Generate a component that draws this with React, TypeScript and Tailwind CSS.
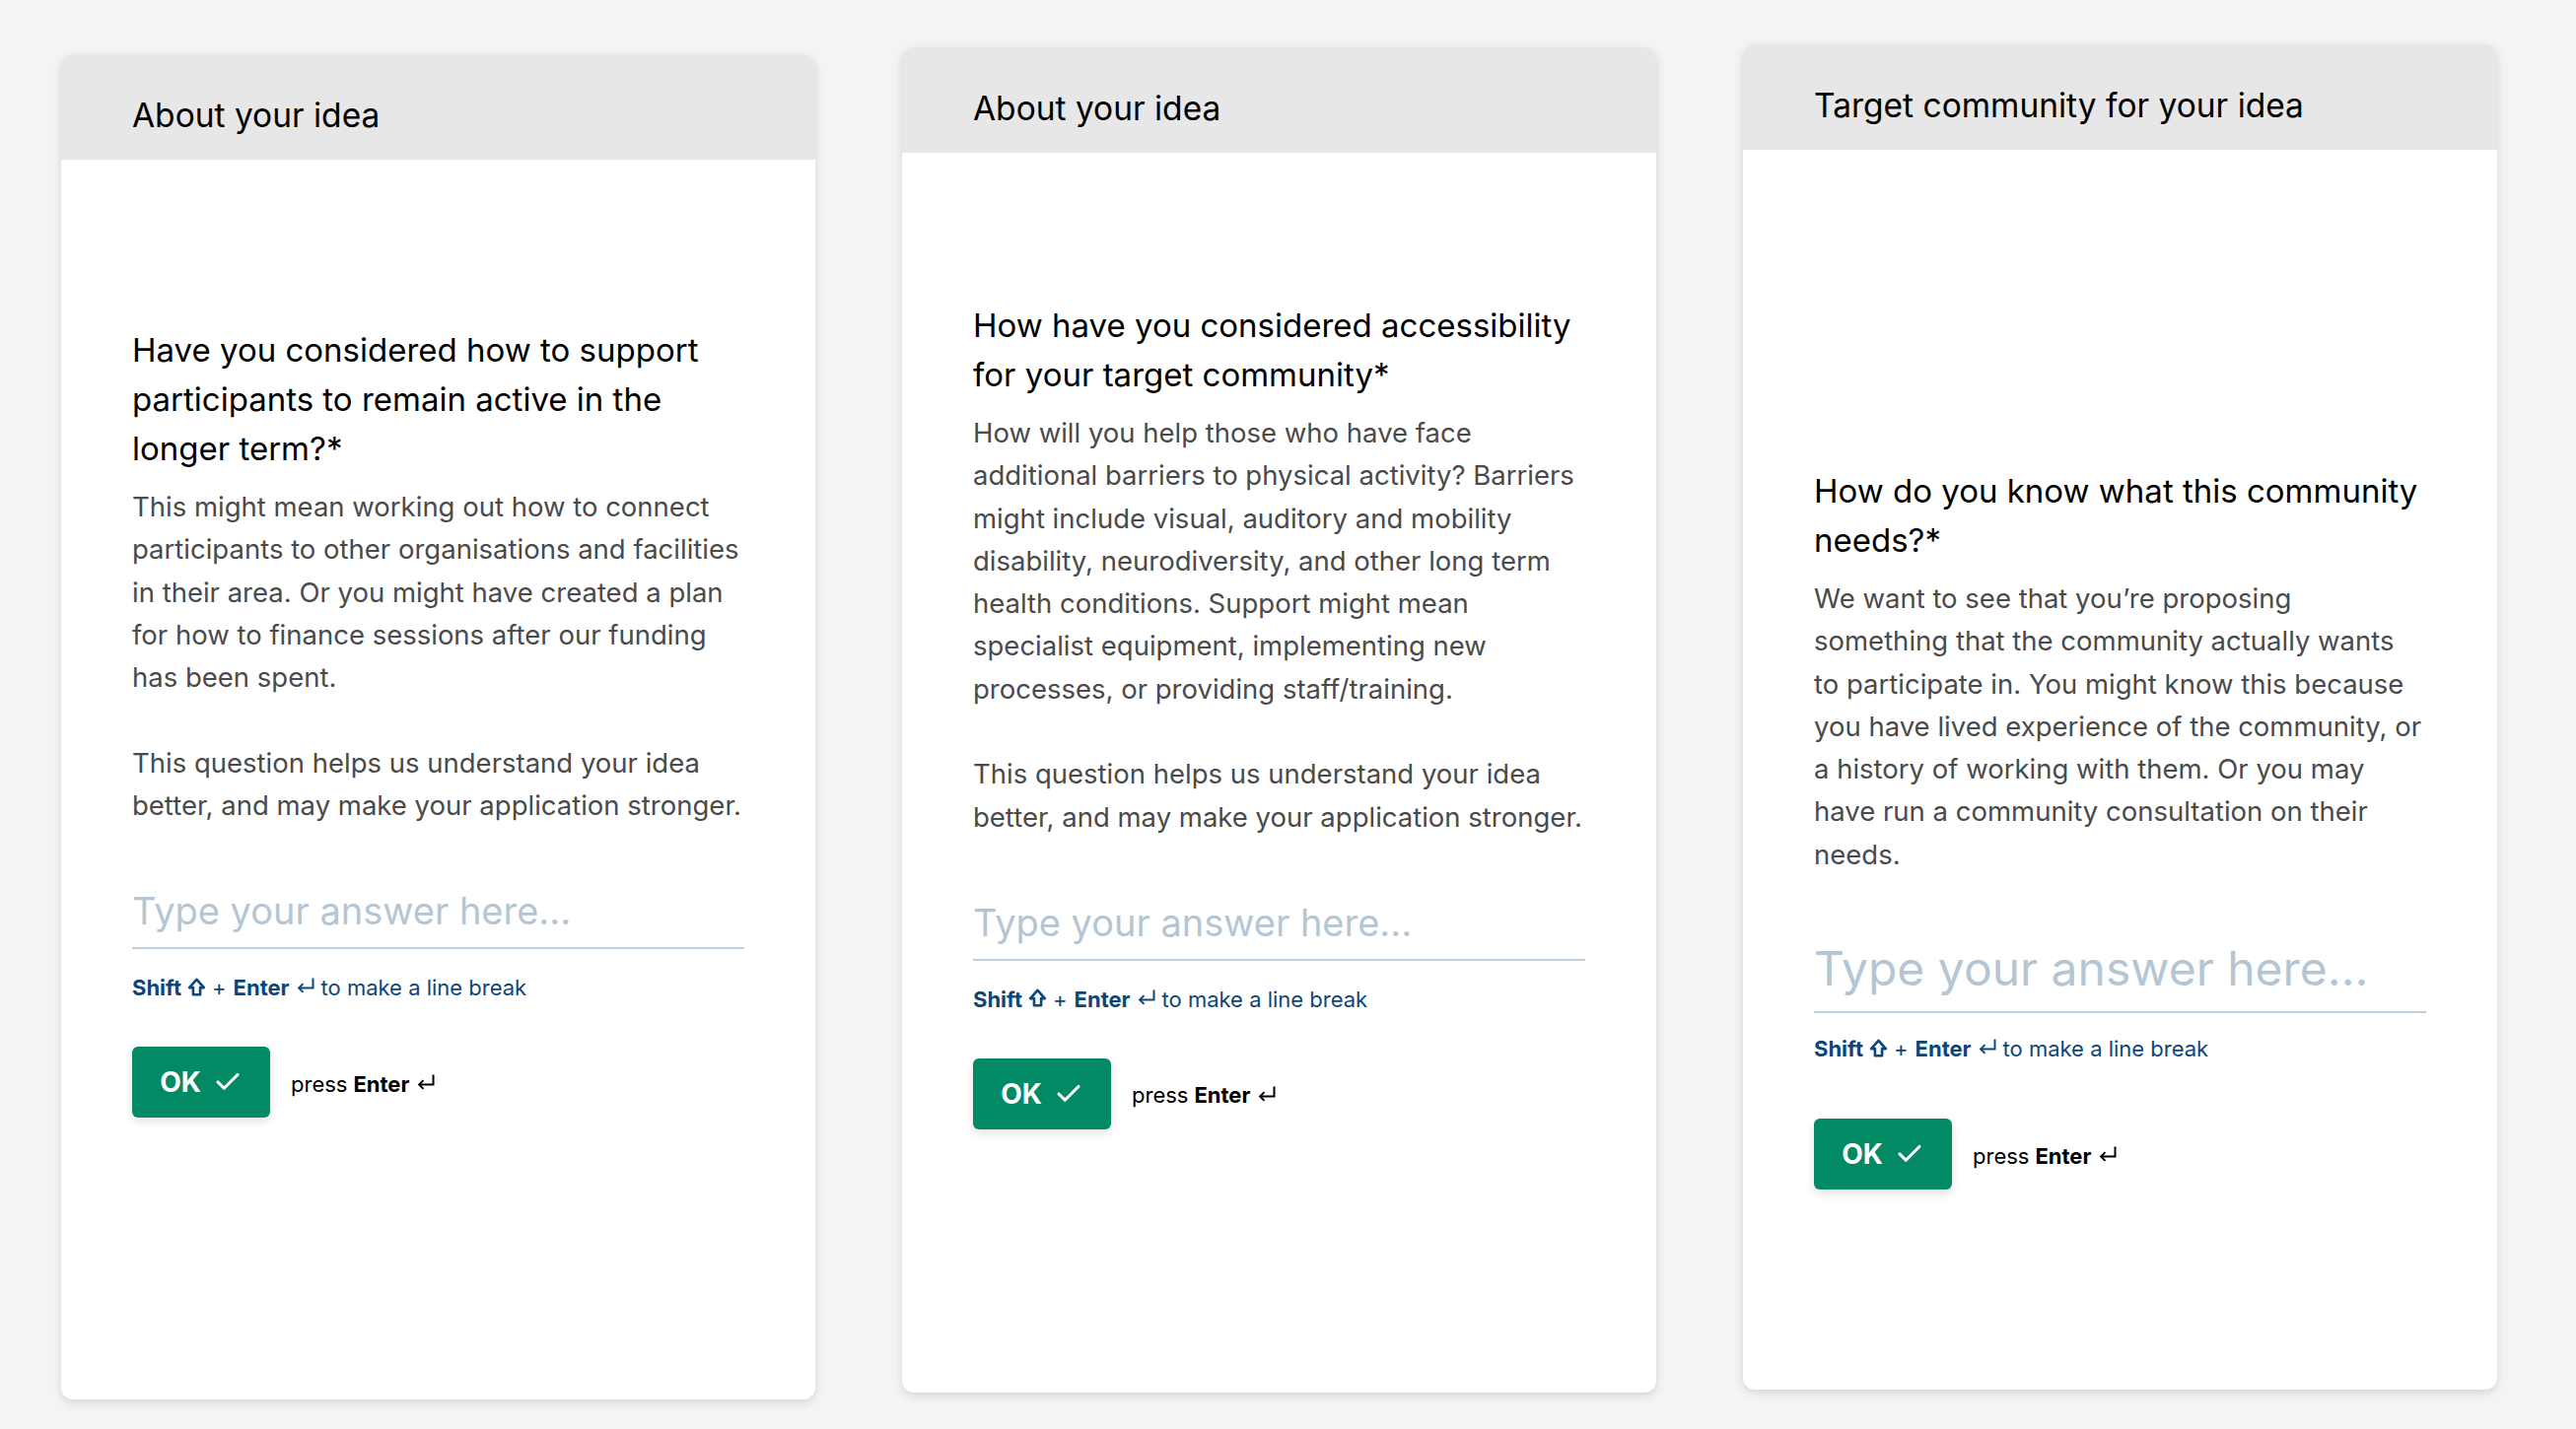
import { Check } from 'lucide-react';

type Question = {
  section: string;
  title: string[];
  paragraphs: string[][];
  cardClass: string;
  bodyClass: string;
  inputClass: string;
  helperClass: string;
  buttonRowClass: string;
};

const questions: Question[] = [
  {
    section: 'About your idea',
    title: ['Have you considered how to support', 'participants to remain active in the', 'longer term?*'],
    paragraphs: [
      [
        'This might mean working out how to connect',
        'participants to other organisations and facilities',
        'in their area. Or you might have created a plan',
        'for how to finance sessions after our funding',
        'has been spent.',
      ],
      ['This question helps us understand your idea', 'better, and may make your application stronger.'],
    ],
    cardClass: 'mt-[55px]',
    bodyClass: 'pt-[168px]',
    inputClass: 'mt-[55px] text-[38px] leading-[60px] pb-[7px]',
    helperClass: 'mt-[24px]',
    buttonRowClass: 'mt-[45px]',
  },
  {
    section: 'About your idea',
    title: ['How have you considered accessibility', 'for your target community*'],
    paragraphs: [
      [
        'How will you help those who have face',
        'additional barriers to physical activity? Barriers',
        'might include visual, auditory and mobility',
        'disability, neurodiversity, and other long term',
        'health conditions. Support might mean',
        'specialist equipment, implementing new',
        'processes, or providing staff/training.',
      ],
      ['This question helps us understand your idea', 'better, and may make your application stronger.'],
    ],
    cardClass: 'mt-[48px]',
    bodyClass: 'pt-[150px]',
    inputClass: 'mt-[55px] text-[38px] leading-[60px] pb-[7px]',
    helperClass: 'mt-[24px]',
    buttonRowClass: 'mt-[45px]',
  },
  {
    section: 'Target community for your idea',
    title: ['How do you know what this community', 'needs?*'],
    paragraphs: [
      [
        'We want to see that you\u2019re proposing',
        'something that the community actually wants',
        'to participate in. You might know this because',
        'you have lived experience of the community, or',
        'a history of working with them. Or you may',
        'have run a community consultation on their',
        'needs.',
      ],
    ],
    cardClass: 'mt-[45px]',
    bodyClass: 'pt-[321px]',
    inputClass: 'mt-[56px] text-[48px] leading-[75px] pb-[6px]',
    helperClass: 'mt-[21px]',
    buttonRowClass: 'mt-[56px]',
  },
];

function ShiftIcon() {
  return (
    <svg viewBox="0 0 16 16" className="inline-block w-[19px] h-[19px] mx-[6px] -mt-[2px]" fill="none" stroke="currentColor" strokeWidth="2.2" strokeLinejoin="round">
      <path d="M8 1.5 L1.8 8.5 H5 V14.5 H11 V8.5 H14.2 Z" />
    </svg>
  );
}

function EnterIcon({ className }: { className: string }) {
  return (
    <svg viewBox="0 0 16 16" className={className} fill="none" stroke="currentColor" strokeWidth="1.6">
      <path d="M14 2 V10 H2.5" />
      <path d="M6 6.5 L2.5 10 L6 13.5" />
    </svg>
  );
}

function QuestionCard({ q }: { q: Question }) {
  return (
    <div className={`w-[765px] h-[1365px] shrink-0 bg-white rounded-[12px] shadow-[0_3px_10px_rgba(0,0,0,0.13)] overflow-hidden flex flex-col ${q.cardClass}`}>
      {/* Section header */}
      <div className="h-[107px] shrink-0 bg-[#e7e7e7] px-[72px] pt-[42px]">
        <h2 className="text-[33.5px] leading-[40px] text-black">{q.section}</h2>
      </div>

      <div className={`px-[72px] ${q.bodyClass}`}>
        <h1 className="text-[33px] leading-[50px] text-black">
          {q.title.map((line, i) => (
            <span key={i} className="block whitespace-nowrap">
              {line}
            </span>
          ))}
        </h1>
        <div className="mt-[13px] text-[27.5px] leading-[43.3px] text-[#4a4a4a]">
          {q.paragraphs.map((p, i) => (
            <p key={i} className={i > 0 ? 'mt-[43.3px]' : ''}>
              {p.map((line, j) => (
                <span key={j} className="block whitespace-nowrap">
                  {line}
                </span>
              ))}
            </p>
          ))}
        </div>

        {/* Answer field */}
        <div className={`border-b-2 border-[#bfcfdb] text-[#b4c6d4] ${q.inputClass}`}>
          Type your answer here...
        </div>

        <div className={`text-[22px] leading-[30px] text-[#0d4778] flex items-center ${q.helperClass}`}>
          <span className="font-bold">Shift</span>
          <ShiftIcon />
          <span>+</span>
          <span className="font-bold ml-[7px]">Enter</span>
          <EnterIcon className="w-[20px] h-[20px] mx-[6px] -mt-[4px]" />
          <span>to make a line break</span>
        </div>

        <div className={`flex items-center ${q.buttonRowClass}`}>
          <button className="h-[72px] w-[140px] rounded-[6px] bg-[#028a64] text-white shadow-[0_4px_10px_rgba(0,0,0,0.12)] flex items-center justify-center gap-[12px]">
            <span className="text-[28px] font-bold">OK</span>
            <Check size={30} strokeWidth={2.5} />
          </button>
          <div className="ml-[21px] mt-[4px] flex items-center text-[22px] text-black">
            <span>press</span>
            <span className="font-bold ml-[6px]">Enter</span>
            <EnterIcon className="w-[20px] h-[20px] ml-[7px] -mt-[4px]" />
          </div>
        </div>
      </div>
    </div>
  );
}

export default function App() {
  return (
    <div className="min-h-screen w-full bg-[#f4f4f4] font-['Inter',sans-serif] flex items-start gap-[88px] pl-[62px]">
      {questions.map((q, i) => (
        <QuestionCard key={i} q={q} />
      ))}
    </div>
  );
}
